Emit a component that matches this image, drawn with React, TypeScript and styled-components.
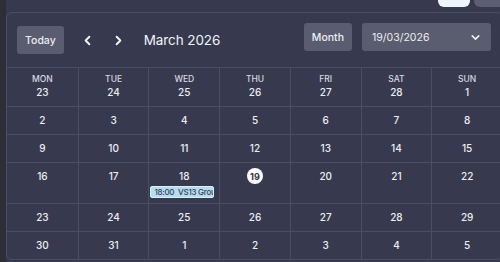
import React from "react"
import styled, { createGlobalStyle } from "styled-components"
import { ChevronLeft, ChevronRight, ChevronDown } from "lucide-react"

const GlobalStyle = createGlobalStyle`
  html, body {
    margin: 0;
    padding: 0;
    background: #373a4f;
    overflow: hidden;
  }
  body {
    font-family: Inter, "Noto Sans", sans-serif;
    color: #e8e9ef;
  }
  * { box-sizing: border-box; }
`

type Day = { n: number; today?: boolean; events?: string[] }

const weekdays = ["MON", "TUE", "WED", "THU", "FRI", "SAT", "SUN"]

const weeks: Day[][] = [
  [23, 24, 25, 26, 27, 28, 1],
  [2, 3, 4, 5, 6, 7, 8],
  [9, 10, 11, 12, 13, 14, 15],
  [16, 17, 18, 19, 20, 21, 22],
  [23, 24, 25, 26, 27, 28, 29],
  [30, 31, 1, 2, 3, 4, 5],
].map((row, w) =>
  row.map(n => ({
    n,
    today: w === 3 && n === 19,
    events: w === 3 && n === 18 ? ["18:00  VS13 Group Stage"] : [],
  }))
)

export default function App() {
  return (
    <>
      <GlobalStyle />
      <Page>
        <SideEdge />
        <Main>
          <TopBar>
            <Tab $active />
            <Tab />
          </TopBar>
          <Card>
            <Toolbar>
              <LeftGroup>
                <ToolButton>Today</ToolButton>
                <NavButton aria-label="previous">
                  <ChevronLeft size={15} strokeWidth={3} />
                </NavButton>
                <NavButton aria-label="next" $gap={7}>
                  <ChevronRight size={15} strokeWidth={3} />
                </NavButton>
                <Title>March 2026</Title>
              </LeftGroup>
              <RightGroup>
                <ToolButton>Month</ToolButton>
                <DateSelect>
                  <span>19/03/2026</span>
                  <ChevronDown size={13} strokeWidth={3} />
                </DateSelect>
              </RightGroup>
            </Toolbar>
            <Grid>
              {weeks.map((week, w) => (
                <Week key={w}>
                  {week.map((day, d) => (
                    <Cell key={d}>
                      {w === 0 && <DayName>{weekdays[d]}</DayName>}
                      <DayNumber>
                        {day.today ? <TodayBadge>{day.n}</TodayBadge> : day.n}
                      </DayNumber>
                      <Events>
                        {day.events?.map(e => (
                          <EventChip key={e}>{e}</EventChip>
                        ))}
                      </Events>
                    </Cell>
                  ))}
                </Week>
              ))}
            </Grid>
          </Card>
        </Main>
      </Page>
    </>
  )
}

// --- styled components ---

const Page = styled.div`
  display: flex;
  width: 500px;
  height: 262px;
  overflow: hidden;
`

const SideEdge = styled.div`
  flex: 0 0 6px;
  background: #2d2e37;
`

const Main = styled.div`
  flex: 0 0 497px;
  display: flex;
  flex-direction: column;
`

const TopBar = styled.div`
  height: 7px;
  display: flex;
  justify-content: flex-end;
  gap: 4px;
`

const Tab = styled.div<{ $active?: boolean }>`
  width: ${p => (p.$active ? 32 : 36)}px;
  height: 7px;
  border-radius: 0 0 6px 6px;
  background: ${p => (p.$active ? "#edf6fb" : "#5c5e71")};
  margin-right: ${p => (p.$active ? 0 : -7)}px;
`

const Card = styled.div`
  margin-top: 5px;
  width: 497px;
  border: 1px solid #4a4e64;
  border-radius: 6px;
  background: #373a4f;
`

const Toolbar = styled.div`
  height: 55px;
  display: flex;
  justify-content: space-between;
  align-items: flex-start;
  padding: 10px 11px 0 10px;
  border-bottom: 1px solid #4a4e64;
`

const LeftGroup = styled.div`
  display: flex;
  align-items: center;
  margin-top: 3px;
`

const RightGroup = styled.div`
  display: flex;
  align-items: center;
  gap: 10px;
`

const ToolButton = styled.button`
  height: 28px;
  padding: 0 8px;
  border: none;
  border-radius: 3px;
  background: #5a5c6f;
  color: #eceef3;
  font-family: inherit;
  font-size: 10.5px;
  font-weight: 500;
`

const NavButton = styled.button<{ $gap?: number }>`
  width: 24px;
  height: 24px;
  margin-left: ${p => p.$gap ?? 12}px;
  display: flex;
  align-items: center;
  justify-content: center;
  padding: 0;
  border: none;
  background: transparent;
  color: #f2f3f7;
`

const Title = styled.h2`
  margin: 0 0 0 13px;
  font-size: 13.5px;
  font-weight: 400;
  letter-spacing: -0.1px;
  color: #f1f2f6;
`

const DateSelect = styled.div`
  width: 129px;
  height: 28px;
  display: flex;
  align-items: center;
  justify-content: space-between;
  padding: 0 9px 0 10px;
  border-radius: 3px;
  background: #5a5c6f;
  color: #eceef3;
  font-size: 10.5px;
`

const Grid = styled.div`
  display: flex;
  flex-direction: column;
`

const Week = styled.div`
  display: grid;
  grid-template-columns: repeat(7, 1fr);
  & + & {
    border-top: 1px solid #4a4e64;
  }
`

const Cell = styled.div`
  display: flex;
  flex-direction: column;
  align-items: center;
  padding-top: 6px;
  min-width: 0;
  & + & {
    border-left: 1px solid #4a4e64;
  }
`

const DayName = styled.div`
  font-size: 8.5px;
  font-weight: 500;
  line-height: 11px;
  color: #d6d8e0;
`

const DayNumber = styled.div`
  height: 14px;
  display: flex;
  align-items: center;
  font-size: 10px;
  font-weight: 500;
  color: #eceef3;
`

const TodayBadge = styled.span`
  width: 16px;
  height: 16px;
  border-radius: 50%;
  display: flex;
  align-items: center;
  justify-content: center;
  background: #ffffff;
  color: #2f3245;
  font-size: 9px;
  font-weight: 700;
`

const Events = styled.div`
  align-self: stretch;
  min-height: 7px;
  padding: 0 5px 0 1px;
  &:not(:empty) {
    padding-top: 3px;
    padding-bottom: 5px;
  }
`

const EventChip = styled.div`
  height: 12px;
  padding: 0 3px;
  border: 1px solid #dceff9;
  border-radius: 2px;
  background: #b5dcf0;
  color: #3a3e55;
  font-size: 8px;
  font-weight: 500;
  line-height: 10px;
  letter-spacing: -0.25px;
  white-space: pre;
  overflow: hidden;
`
